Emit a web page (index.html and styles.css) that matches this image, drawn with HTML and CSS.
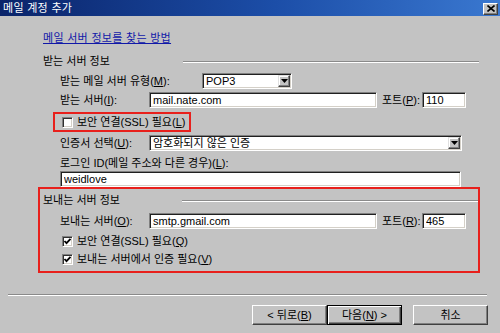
FILE: index.html
```html
<!DOCTYPE html>
<html lang="ko">
<head>
<meta charset="utf-8">
<title>메일 계정 추가</title>
<link rel="stylesheet" href="styles.css">
</head>
<body>
<div class="window">
  <div class="titlebar">
    <span class="title">메일 계정 추가</span>
    <span class="close"><svg width="8" height="7" viewBox="0 0 8 7"><path d="M0.5 0.5 L7.5 6.5 M7.5 0.5 L0.5 6.5" stroke="#000" stroke-width="1.6"/></svg></span>
  </div>
  <div class="content">
    <div class="link-row"><a class="link">메일 서버 정보를 찾는 방법</a></div>
    <div class="section-head head1"><span class="head-label">받는 서버 정보</span><span class="etch"></span></div>

    <div class="field-row row-m">
      <span class="lbl lbl-wide">받는 메일 서버 유형(<u>M</u>):</span>
      <div class="field select sel-type"><span class="val">POP3</span><span class="drop"><svg width="7" height="4" viewBox="0 0 7 4"><path d="M0 0 H7 L3.5 4 Z" fill="#000"/></svg></span></div>
    </div>

    <div class="field-row row-i">
      <span class="lbl lbl-short">받는 서버(<u>I</u>):</span>
      <div class="field input server"><span class="val">mail.nate.com</span></div>
      <span class="lbl port-lbl">포트(<u>P</u>):</span>
      <div class="field input port"><span class="val">110</span></div>
    </div>

    <div class="mark ssl-box">
      <span class="check"></span>
      <span class="cb-text">보안 연결(SSL) 필요(<u>L</u>)</span>
    </div>

    <div class="field-row row-cert">
      <span class="lbl lbl-short">인증서 선택(<u>U</u>):</span>
      <div class="field select sel-cert"><span class="val">암호화되지 않은 인증</span><span class="drop"><svg width="7" height="4" viewBox="0 0 7 4"><path d="M0 0 H7 L3.5 4 Z" fill="#000"/></svg></span></div>
    </div>

    <div class="login-label">로그인 ID(메일 주소와 다른 경우)(<u>L</u>):</div>
    <div class="field-row row-login">
      <div class="field input login"><span class="val">weidlove</span></div>
    </div>

    <div class="mark out-box">
      <div class="section-head head2"><span class="head-label">보내는 서버 정보</span><span class="etch"></span></div>
      <div class="field-row row-o">
        <span class="lbl lbl-short">보내는 서버(<u>O</u>):</span>
        <div class="field input server"><span class="val">smtp.gmail.com</span></div>
        <span class="lbl port-lbl">포트(<u>R</u>):</span>
        <div class="field input port"><span class="val">465</span></div>
      </div>
      <div class="cb-row cb-q">
        <span class="check checked"><svg width="9" height="9" viewBox="0 0 9 9"><path d="M1.5 4 L3.5 6.2 L7.5 1.8" stroke="#000" stroke-width="1.8" fill="none"/></svg></span>
        <span class="cb-text">보안 연결(SSL) 필요(<u>Q</u>)</span>
      </div>
      <div class="cb-row cb-v">
        <span class="check checked"><svg width="9" height="9" viewBox="0 0 9 9"><path d="M1.5 4 L3.5 6.2 L7.5 1.8" stroke="#000" stroke-width="1.8" fill="none"/></svg></span>
        <span class="cb-text">보내는 서버에서 인증 필요(<u>V</u>)</span>
      </div>
    </div>

    <div class="separator"></div>

    <div class="buttons">
      <span class="btn">&lt; 뒤로(<u>B</u>)</span>
      <span class="btn default">다음(<u>N</u>) &gt;</span>
      <span class="btn cancel">취소</span>
    </div>
  </div>
</div>
</body>
</html>
```

FILE: styles.css
```css
html, body {
  margin: 0;
  padding: 0;
}
body {
  width: 500px;
  height: 333px;
  overflow: hidden;
  font-family: "Liberation Sans", "Noto Sans CJK KR", sans-serif;
  font-size: 11px;
  color: #000;
}
.window {
  width: 500px;
  height: 333px;
  background: #c3c3c3;
  display: flex;
  flex-direction: column;
}
.titlebar {
  height: 16px;
  flex: none;
  background: linear-gradient(to right, #0a246a 0%, #1c4ea8 55%, #3a78d0 100%);
  display: flex;
  align-items: center;
  justify-content: space-between;
  padding: 0 2px 0 3px;
  color: #fff;
  line-height: 14px;
}
.title {
  font-size: 11px;
  letter-spacing: 0.3px;
}
.close {
  width: 13px;
  height: 10px;
  margin-top: 1px;
  background: #c3c3c3;
  border-top: 1px solid #fff;
  border-left: 1px solid #fff;
  border-right: 1px solid #404040;
  border-bottom: 1px solid #404040;
  box-shadow: inset -1px -1px #808080;
  display: flex;
  align-items: center;
  justify-content: center;
}
.content {
  display: flex;
  flex-direction: column;
  padding-top: 15px;
}
.link-row {
  height: 14px;
  line-height: 14px;
  padding-left: 43px;
}
.link {
  color: #1018a8;
  text-decoration: underline;
  letter-spacing: 0.3px;
}
.section-head {
  display: flex;
  align-items: center;
  height: 14px;
  line-height: 14px;
}
.head1 {
  margin-top: 9px;
  padding-left: 43px;
}
.head-label {
  width: 140px;
  flex: none;
}
.etch {
  height: 0;
  border-top: 1px solid #8a8a8a;
  border-bottom: 1px solid #fff;
}
.head1 .etch {
  width: 296px;
  margin-top: 2px;
}
.head2 {
  margin-top: 4px;
  padding-left: 3px;
}
.head2 .head-label {
  width: 139px;
}
.head2 .etch {
  flex: 1;
  margin-top: 2px;
}
.field-row {
  display: flex;
  align-items: center;
  height: 16px;
  padding-left: 60px;
}
.lbl {
  line-height: 14px;
  white-space: nowrap;
}
.lbl-wide {
  width: 142px;
  flex: none;
}
.lbl-short {
  width: 89px;
  flex: none;
}
.field {
  box-sizing: border-box;
  height: 16px;
  background: #fff;
  border-top: 1px solid #808080;
  border-left: 1px solid #808080;
  border-right: 1px solid #fff;
  border-bottom: 1px solid #fff;
  box-shadow: inset 1px 1px #202020, inset -1px -1px #d4d0c8;
  display: flex;
  align-items: center;
  padding-left: 3px;
  line-height: 12px;
  flex: none;
}
.val {
  flex: 1;
  white-space: nowrap;
  overflow: hidden;
}
.row-m {
  margin-top: 5px;
}
.sel-type {
  width: 90px;
}
.drop {
  box-sizing: border-box;
  width: 12px;
  height: 12px;
  margin-right: 1px;
  background: #c3c3c3;
  border-top: 1px solid #e0e0e0;
  border-left: 1px solid #e0e0e0;
  border-right: 1px solid #404040;
  border-bottom: 1px solid #404040;
  box-shadow: inset -1px -1px #808080, inset 1px 1px #fff;
  display: flex;
  align-items: center;
  justify-content: center;
  flex: none;
}
.row-i {
  margin-top: 3px;
}
.server {
  width: 228px;
}
.port-lbl {
  margin-left: 5px;
  width: 40px;
  flex: none;
}
.port {
  width: 44px;
}
.mark {
  border: 2px solid #e8201c;
  box-sizing: border-box;
}
.ssl-box {
  margin-top: 4px;
  margin-left: 53px;
  width: 138px;
  height: 20px;
  display: flex;
  align-items: center;
  padding-left: 7px;
}
.check {
  box-sizing: border-box;
  width: 11px;
  height: 11px;
  flex: none;
  background: #fff;
  border-top: 1px solid #808080;
  border-left: 1px solid #808080;
  border-right: 1px solid #fff;
  border-bottom: 1px solid #fff;
  box-shadow: inset 1px 1px #303030, inset -1px -1px #d4d0c8;
  display: flex;
  align-items: center;
  justify-content: center;
}
.cb-text {
  margin-left: 4px;
  line-height: 14px;
  white-space: nowrap;
}
.row-cert {
  margin-top: 3px;
}
.sel-cert {
  width: 313px;
}
.login-label {
  margin-top: 5px;
  height: 14px;
  line-height: 14px;
  padding-left: 60px;
}
.row-login {
  margin-top: 1px;
}
.login {
  width: 401px;
}
.out-box {
  margin-left: 38px;
  width: 442px;
  height: 86px;
  display: flex;
  flex-direction: column;
}
.out-box .field-row {
  padding-left: 20px;
}
.row-o {
  margin-top: 6px;
}
.cb-row {
  display: flex;
  align-items: center;
  height: 14px;
  padding-left: 22px;
}
.cb-q {
  margin-top: 5px;
}
.cb-v {
  margin-top: 4px;
}
.separator {
  margin: 21px 13px 0 8px;
  height: 0;
  border-top: 1px solid #8a8a8a;
  border-bottom: 1px solid #fff;
}
.buttons {
  display: flex;
  justify-content: flex-end;
  margin-top: 9px;
  padding-right: 12px;
}
.btn {
  box-sizing: border-box;
  width: 75px;
  height: 20px;
  display: flex;
  align-items: center;
  justify-content: center;
  background: #c3c3c3;
  border-top: 1px solid #fff;
  border-left: 1px solid #fff;
  border-right: 1px solid #404040;
  border-bottom: 1px solid #404040;
  box-shadow: inset -1px -1px #808080;
  line-height: 14px;
  white-space: nowrap;
}
.btn.default {
  border: 1px solid #000;
  box-shadow: inset 1px 1px #fff, inset -1px -1px #404040, inset -2px -2px #808080;
}
.btn.cancel {
  margin-left: 11px;
}
```
